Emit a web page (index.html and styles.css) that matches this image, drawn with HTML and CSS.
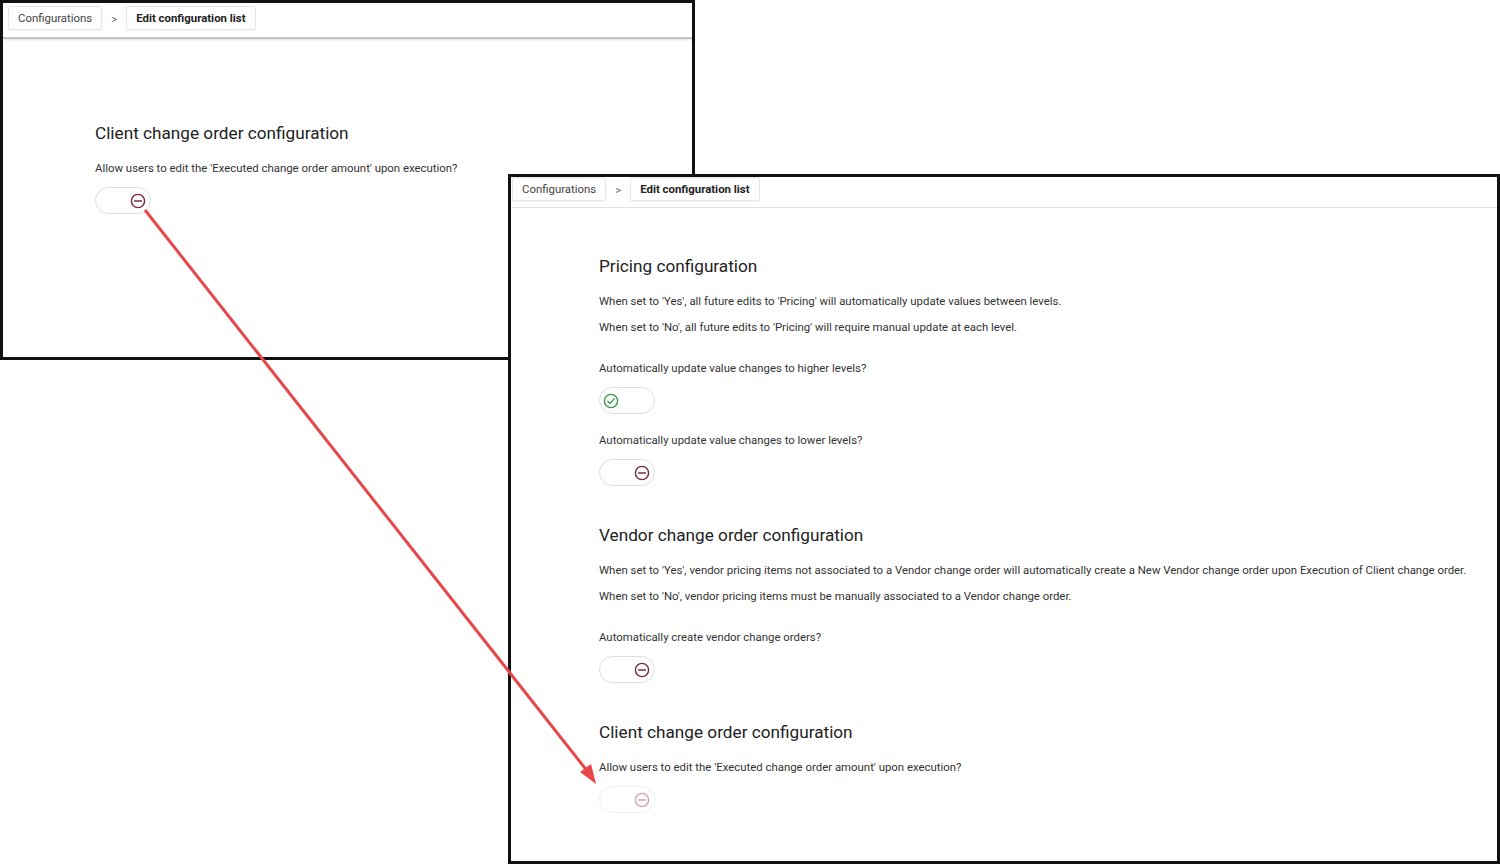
FILE: index.html
```html
<!DOCTYPE html>
<html lang="en">
<head>
<meta charset="utf-8">
<title>Configurations</title>
<link rel="stylesheet" href="styles.css">
</head>
<body>
<div class="canvas">
  <section class="window window-back">
    <header class="crumbs crumbs-back">
      <span class="crumb">Configurations</span>
      <span class="sep">&gt;</span>
      <span class="crumb crumb-current">Edit configuration list</span>
    </header>
    <div class="content content-back">
      <div class="section">
        <h2 class="title">Client change order configuration</h2>
        <div class="question">
          <p class="label">Allow users to edit the 'Executed change order amount' upon execution?</p>
          <span class="toggle off">
            <svg class="ico" viewBox="0 0 16 16"><circle cx="8" cy="8" r="6.6"/><line x1="4.6" y1="8" x2="11.4" y2="8"/></svg>
          </span>
        </div>
      </div>
    </div>
  </section>

  <section class="window window-front">
    <header class="crumbs crumbs-front">
      <span class="crumb">Configurations</span>
      <span class="sep">&gt;</span>
      <span class="crumb crumb-current">Edit configuration list</span>
    </header>
    <div class="content content-front">
      <div class="section">
        <h2 class="title">Pricing configuration</h2>
        <p class="desc">When set to 'Yes', all future edits to 'Pricing' will automatically update values between levels.</p>
        <p class="desc">When set to 'No', all future edits to 'Pricing' will require manual update at each level.</p>
        <div class="question first">
          <p class="label">Automatically update value changes to higher levels?</p>
          <span class="toggle on">
            <svg class="ico" viewBox="0 0 16 16"><circle cx="8" cy="8" r="6.6"/><polyline points="4.8,8.2 7.1,10.4 11.2,5.9"/></svg>
          </span>
        </div>
        <div class="question">
          <p class="label">Automatically update value changes to lower levels?</p>
          <span class="toggle off">
            <svg class="ico" viewBox="0 0 16 16"><circle cx="8" cy="8" r="6.6"/><line x1="4.6" y1="8" x2="11.4" y2="8"/></svg>
          </span>
        </div>
      </div>
      <div class="section">
        <h2 class="title">Vendor change order configuration</h2>
        <p class="desc">When set to 'Yes', vendor pricing items not associated to a Vendor change order will automatically create a New Vendor change order upon Execution of Client change order.</p>
        <p class="desc">When set to 'No', vendor pricing items must be manually associated to a Vendor change order.</p>
        <div class="question first">
          <p class="label">Automatically create vendor change orders?</p>
          <span class="toggle off">
            <svg class="ico" viewBox="0 0 16 16"><circle cx="8" cy="8" r="6.6"/><line x1="4.6" y1="8" x2="11.4" y2="8"/></svg>
          </span>
        </div>
      </div>
      <div class="section">
        <h2 class="title">Client change order configuration</h2>
        <div class="question">
          <p class="label">Allow users to edit the 'Executed change order amount' upon execution?</p>
          <span class="toggle off faded">
            <svg class="ico" viewBox="0 0 16 16"><circle cx="8" cy="8" r="6.6"/><line x1="4.6" y1="8" x2="11.4" y2="8"/></svg>
          </span>
        </div>
      </div>
    </div>
  </section>

  <svg class="arrow" viewBox="0 0 1500 864" width="1500" height="864">
    <line x1="145" y1="210" x2="588" y2="772" />
    <polygon points="596,784 580,772 591,764" />
  </svg>
</div>
</body>
</html>
```

FILE: styles.css
```css
* { box-sizing: border-box; }
html, body { margin: 0; padding: 0; background: #fff; }
body {
  font-family: Roboto, "Liberation Sans", Arial, sans-serif;
  color: #333;
  width: 1500px;
  height: 864px;
  overflow: hidden;
}
.canvas {
  position: relative;
  width: 1500px;
  height: 864px;
}
.window {
  position: absolute;
  background: #fff;
  border: 3px solid #111;
  overflow: hidden;
}
.window-back {
  left: 0; top: 0;
  width: 695px; height: 360px;
  z-index: 1;
}
.window-front {
  left: 508px; top: 174px;
  width: 992px; height: 690px;
  z-index: 2;
}
.crumbs {
  display: flex;
  align-items: center;
  height: 34px;
}
.crumbs-back {
  padding: 3px 0 7px 5px;
  height: 36px;
  border-bottom: 2px solid #c4c4c4;
  box-shadow: 0 1px 2px rgba(0,0,0,0.12);
}
.crumbs-front {
  padding: 0 0 6px 1px;
  height: 31px;
  border-bottom: 1px solid #e2e2e2;
}
.crumb {
  display: inline-flex;
  align-items: center;
  height: 24px;
  padding: 0 9px;
  border: 1px solid #e6e6e6;
  border-radius: 2px;
  background: #fff;
  font-size: 11.4px;
  color: #444;
  box-shadow: 0 1px 1px rgba(0,0,0,0.05);
}
.crumb-current {
  font-weight: 700;
  color: #222;
}
.sep {
  width: 24px;
  text-align: center;
  font-size: 11.4px;
  color: #666;
  padding-top: 2px;
}
.content-back { padding: 82px 0 0 92px; }
.content-front { padding: 46px 0 0 88px; }
.section {
  display: flex;
  flex-direction: column;
  align-items: flex-start;
  margin-bottom: 37px;
}
.title {
  margin: 0 0 15px 0;
  font-size: 17.2px;
  line-height: 24px;
  font-weight: 400;
  color: #222;
}
.desc, .label {
  margin: 0;
  font-size: 11.4px;
  line-height: 16px;
  color: #333;
  white-space: nowrap;
}
.desc + .desc { margin-top: 10px; }
.question {
  display: flex;
  flex-direction: column;
  align-items: flex-start;
  gap: 11px;
}
.question.first { margin-top: 25px; }
.question + .question { margin-top: 18px; }
.toggle {
  display: flex;
  align-items: center;
  width: 56px;
  height: 27px;
  border: 1px solid #dcdcdc;
  border-radius: 14px;
  background: #fff;
}
.toggle.on { justify-content: flex-start; padding-left: 3px; }
.toggle.off { justify-content: flex-end; padding-right: 4px; }
.ico {
  width: 16px;
  height: 16px;
  fill: none;
  stroke-width: 1.4;
  stroke-linecap: round;
  stroke-linejoin: round;
}
.on .ico { stroke: #3b9b4a; }
.off .ico { stroke: #7b2a3a; }
.toggle.faded { border-color: #eeeeee; }
.faded .ico { stroke: #d7a0aa; }
.arrow {
  position: absolute;
  left: 0; top: 0;
  z-index: 3;
  pointer-events: none;
}
.arrow line { stroke: #e8474a; stroke-width: 3; }
.arrow polygon { fill: #e8474a; }
```
